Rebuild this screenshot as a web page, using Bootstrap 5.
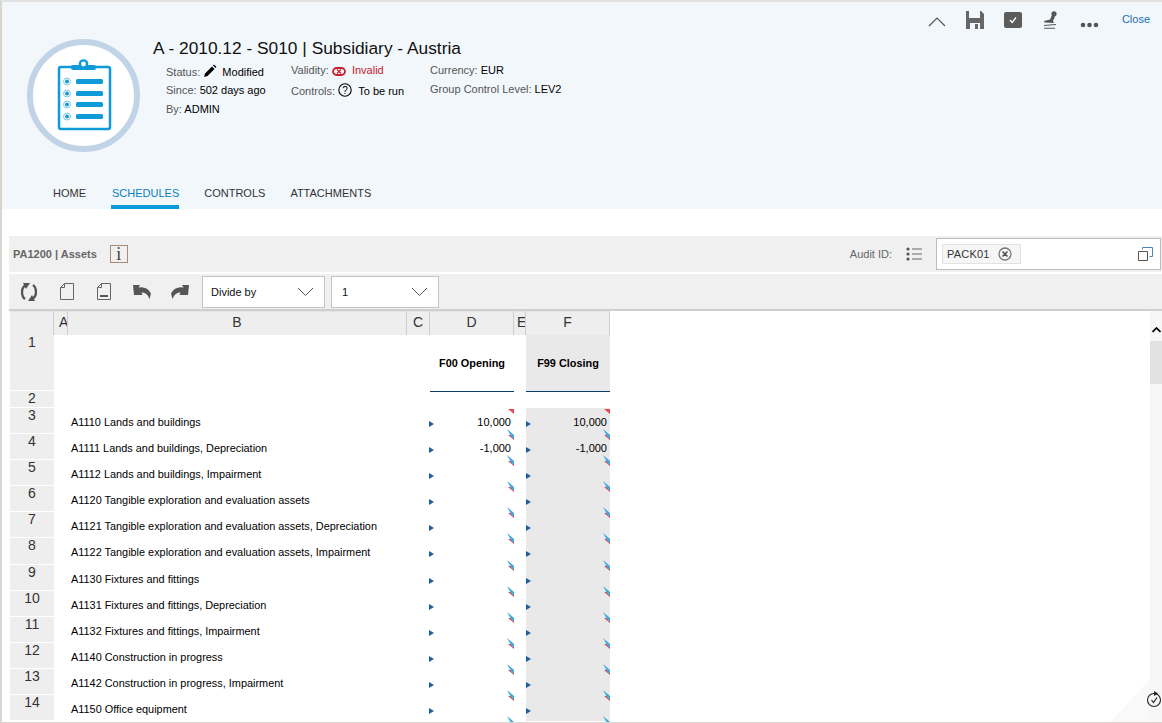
<!DOCTYPE html>
<html lang="en">
<head>
<meta charset="UTF-8">
<meta name="viewport" content="width=device-width, initial-scale=1.0">
<title>A - 2010.12 - S010 | Subsidiary - Austria</title>
<link rel="stylesheet" href="https://cdn.jsdelivr.net/npm/bootstrap@5.3.0/dist/css/bootstrap.min.css">
<style>
html, body { height: 723px; overflow: hidden; }
body { font-family: "Liberation Sans", Arial, sans-serif; font-size: 11px; color: #000; background: #fff; border-top: 2px solid #e2e2e2; border-left: 2px solid #d8d5cf; border-bottom: 1px solid #d8d5cf; }
.pack-head { background: #f2f7fc; height: 207px; }
.head-actions { height: 37px; padding-top: 9px; }
.head-actions svg { display: block; }
.close-link { color: #1a6fb0; text-decoration: none; line-height: 16px; margin-left: 23px; margin-right: 12px; }
.head-body { height: 145px; padding-left: 25px; }
.logo-ring { width: 113px; height: 113px; flex: none; }
.head-text { padding-left: 13px; }
.pack-title { font-size: 17.33px; line-height: 18px; margin: 0; font-weight: 400; color: #111; }
.info-cols { padding-left: 13px; margin-top: 4px; }
.info-col-a { width: 125px; }
.info-col-b { width: 139px; }
.info-line { line-height: 19px; white-space: nowrap; }
.first-status { padding-top: 2px; line-height: 18px; }
.status-pen { margin-right: 2px; }
.second-control { margin-top: 2px; }
.info-label { color: #555; }
.invalid-text { color: #c8202c; }
.pack-tabs { padding-left: 51px; gap: 25px; height: 25px; }
.pack-tabs .nav-link { padding: 0; color: #333; font-size: 11px; line-height: 19px; height: 25px; }
.pack-tabs .nav-link.active { color: #0b7fb8; border-bottom: 4px solid #0b9ddb; padding: 0 0 0 1px; }
.tool-title { margin: 27px 0 0 7px; height: 36px; background: #f0f0f0; padding-left: 4px; }
.sheet-name { color: #666; font-weight: 700; }
.info-box { width: 18px; height: 18px; border: 1px solid #a98a74; margin-left: 13px; font-family: "Liberation Serif", serif; font-size: 18px; line-height: 16px; text-align: center; color: #444; }
.audit-label { color: #666; margin-right: 14px; }
.audit-input { width: 225px; height: 32px; background: #fff; border: 1px solid #bcbcbc; margin: 0 1px 0 14px; padding: 0 7px 0 5px; }
.audit-chip { width: 79px; height: 20px; background: #f6f6f6; border: 1px solid #e2e2e2; padding-left: 4px; color: #333; letter-spacing: .2px; }
.tool-icons { margin: 2px 0 0 7px; height: 35px; background: #f0f0f0; padding-left: 12px; }
.tool-icons svg { flex: none; }
.gap-23 { margin-left: 23px; }
.tool-select { height: 32px; font-size: 11px; border-radius: 0; border: 1px solid #c4c4c4; padding: 1px 8px 0; color: #111; background-size: 17px 10px; background-position: right 10px center; background-image: url("data:image/svg+xml,%3csvg xmlns='http://www.w3.org/2000/svg' viewBox='0 0 17 10'%3e%3cpath fill='none' stroke='%23555' d='M1 1l7.5 7.5L16 1'/%3e%3c/svg%3e"); }
.select-divide { width: 123px; margin-left: 13px; }
.select-factor { width: 108px; margin-left: 6px; padding-left: 10px; }
.grid-rule { height: 2px; margin-left: 7px; background: #cfcfcf; }
.sheet-wrap { margin-left: 8px; height: 411px; overflow: hidden; }
.sheet-grid { display: grid; grid-template-columns: 44px 14px 339px 23px 84px 12px 84px; grid-template-rows: 24px 56px 17px; grid-auto-rows: 26.1px; width: 600px; flex: none; }
.col-head { background: #eee; border-right: 1px solid #cfcfcf; border-top: 1px solid #e4e4e4; text-align: center; font-size: 14px; line-height: 20px; color: #333; overflow: hidden; white-space: nowrap; }
.col-narrow { text-align: left; padding-left: 5px; }
.col-narrow-e { text-align: left; padding-left: 3px; }
.row-head { background: #eee; border-bottom: 1px solid #fff; text-align: center; font-size: 14px; line-height: 14px; color: #333; }
.acct-name { padding: 8px 0 0 3px; font-size: 10.9px; line-height: 13px; white-space: nowrap; }
.measure-head { display: flex; align-items: center; justify-content: center; font-weight: 700; font-size: 10.9px; box-shadow: 0 1px 0 #0b3c6e; padding-top: 1px; }
.shade { background: #e9e9e9; }
.num-cell { position: relative; text-align: right; padding: 8px 3px 0 0; font-size: 11px; line-height: 13px; }
.flag-red { position: absolute; top: 1px; right: 0; }
.flag-blue { position: absolute; bottom: -4px; right: 0; z-index: 1; }
.nav-tick { position: absolute; top: 13px; left: -1px; }
.nav-tick-f { left: 0; }
.sheet-scroll { width: 12px; background: #f7f7f7; margin-left: auto; height: 100%; position: relative; }
.scroll-thumb { height: 43px; background: #e2e2e2; margin-top: 30px; }
.scroll-up { position: absolute; top: 16px; left: 2px; }
.recalc-icon { position: absolute; right: 0; bottom: 14px; }
.corner-fold { position: absolute; right: 12px; bottom: 0; }
</style>
</head>
<body>
<!-- Package header -->
<div class="pack-head">
    <div class="head-actions d-flex justify-content-end">
        <svg width="18" height="12" viewBox="0 0 18 12" class="mt-1"><path d="M1 11l8-8 8 8" fill="none" stroke="#555" stroke-width="1.2"/></svg>
        <svg width="18" height="18" viewBox="0 0 18 18" style="margin-left:20px"><path d="M0 0h15l3 3v15H0z" fill="#666"/><path d="M3 0h11v7H3zM4 12h10v6H4z" fill="#f2f7fc"/><path d="M9 13h3v5H9z" fill="#666"/></svg>
        <svg width="18" height="16" viewBox="0 0 18 16" style="margin-left:20px;margin-top:1px"><rect width="18" height="16" rx="2" fill="#5c5c5c"/><path d="M6 8l2.2 2.4L12 5.5" fill="none" stroke="#fff" stroke-width="1.3"/></svg>
        <svg width="16" height="18" viewBox="0 0 16 18" style="margin-left:21px"><circle cx="11" cy="2.800" r="2.600" fill="#555"/><path d="M9 4l3 1.500-2 4.500 1 2-9.500-.500L1 10l6-1.500z" fill="#555"/><path d="M1 14.500l12-1M1 17.300h11" stroke="#555" stroke-width="1.100"/></svg>
        <svg width="19" height="6" viewBox="0 0 19 6" style="margin-left:21px;margin-top:11px"><circle cx="3" cy="3" r="2.300" fill="#555"/><circle cx="9.500" cy="3" r="2.300" fill="#555"/><circle cx="16" cy="3" r="2.300" fill="#555"/></svg>
        <a href="#" class="close-link">Close</a>
    </div>
    <div class="head-body d-flex">
        <svg class="logo-ring" viewBox="0 0 113 113">
            <circle cx="56.500" cy="56.500" r="53.500" fill="#fff" stroke="#c1d4e7" stroke-width="6"/>
            <rect x="32" y="28" width="51" height="62" rx="2" fill="#fff" stroke="#0f9bd7" stroke-width="2.500"/>
            <rect x="44" y="26" width="25" height="5" rx="2" fill="#0f9bd7"/>
            <circle cx="56.500" cy="25" r="4.800" fill="#0f9bd7"/>
            <circle cx="56.500" cy="25" r="2.400" fill="#fff"/>
            <g fill="#0f9bd7">
                <rect x="49" y="40" width="27" height="5" rx="1.500"/><rect x="49" y="52" width="27" height="5" rx="1.500"/><rect x="49" y="63" width="27" height="5" rx="1.500"/><rect x="49" y="75" width="27" height="5" rx="1.500"/>
                <circle cx="40" cy="42.500" r="2"/><circle cx="40" cy="54.500" r="2"/><circle cx="40" cy="65.500" r="2"/><circle cx="40" cy="77.500" r="2"/>
            </g>
            <g fill="none" stroke="#7cc6e8"><circle cx="40" cy="42.500" r="3.500"/><circle cx="40" cy="54.500" r="3.500"/><circle cx="40" cy="65.500" r="3.500"/><circle cx="40" cy="77.500" r="3.500"/></g>
        </svg>
        <div class="head-text">
            <h1 class="pack-title">A - 2010.12 - S010 | Subsidiary - Austria</h1>
            <div class="info-cols d-flex">
                <div class="info-col-a">
                    <div class="info-line first-status"><span class="info-label">Status:</span>
                        <svg width="14" height="14" viewBox="0 0 14 14" class="align-text-bottom status-pen"><path d="M1 13l1-3.500 7-7 2.500 2.500-7 7z M10 1.500l1-1 2.500 2.500-1 1z" fill="#000"/></svg>
                        Modified</div>
                    <div class="info-line"><span class="info-label">Since:</span> 502 days ago</div>
                    <div class="info-line"><span class="info-label">By:</span> ADMIN</div>
                </div>
                <div class="info-col-b">
                    <div class="info-line"><span class="info-label">Validity:</span>
                        <svg width="14" height="9" viewBox="0 0 14 9"><rect x="1" y="1" width="12" height="7" rx="3.500" fill="none" stroke="#c8202c" stroke-width="1.800"/><path d="M5 2.500l4 4M9 2.500l-4 4" stroke="#c8202c" stroke-width="1.200"/></svg>
                        &nbsp;<span class="invalid-text">Invalid</span></div>
                    <div class="info-line second-control"><span class="info-label">Controls:</span>
                        <svg width="14" height="14" viewBox="0 0 14 14" class="align-text-bottom"><circle cx="7" cy="7" r="6.200" fill="none" stroke="#000" stroke-width="1.100"/><text x="7" y="10.500" font-size="10" text-anchor="middle" font-family="Liberation Sans">?</text></svg>
                        &nbsp;To be run</div>
                </div>
                <div>
                    <div class="info-line"><span class="info-label">Currency:</span> EUR</div>
                    <div class="info-line"><span class="info-label">Group Control Level:</span> LEV2</div>
                </div>
            </div>
        </div>
    </div>
    <ul class="nav pack-tabs">
        <li class="nav-item"><a class="nav-link" href="#">HOME</a></li>
        <li class="nav-item"><a class="nav-link active" href="#">SCHEDULES</a></li>
        <li class="nav-item"><a class="nav-link" href="#">CONTROLS</a></li>
        <li class="nav-item"><a class="nav-link" href="#">ATTACHMENTS</a></li>
    </ul>
</div>

<!-- Schedule title bar -->
<div class="tool-title d-flex align-items-center">
    <span class="sheet-name">PA1200 | Assets</span>
    <span class="info-box">i</span>
    <span class="audit-label ms-auto">Audit ID:</span>
    <svg width="16" height="14" viewBox="0 0 16 14"><g fill="#555"><circle cx="2" cy="2" r="1.600"/><circle cx="2" cy="7" r="1.600"/><circle cx="2" cy="12" r="1.600"/></g><path d="M6 2h10M6 7h10M6 12h10" stroke="#666"/></svg>
    <div class="audit-input d-flex align-items-center justify-content-between">
        <span class="audit-chip d-flex align-items-center justify-content-between">PACK01
            <svg width="14" height="14" viewBox="0 0 14 14" class="me-2"><circle cx="7" cy="7" r="6" fill="none" stroke="#777" stroke-width="1.300"/><path d="M4.500 4.500l5 5M9.500 4.500l-5 5" stroke="#555" stroke-width="1.600"/></svg>
        </span>
        <svg width="15" height="14" viewBox="0 0 15 14"><path d="M.5 4.500h9v9h-9z" fill="none" stroke="#555"/><path d="M4.500 2.500v-2h10v9h-3" fill="none" stroke="#4a86b8"/></svg>
    </div>
</div>

<!-- Grid toolbar -->
<div class="tool-icons d-flex align-items-center">
    <svg width="16" height="18" viewBox="0 0 16 18"><path d="M5 2Q1 4 1 9t3 7M11 16q4-2 4-7t-3-7" fill="none" stroke="#555" stroke-width="2.400"/><path d="M2 0h7L5 6zM14 18H7l4-6z" fill="#555"/></svg>
    <svg width="14" height="17" viewBox="0 0 14 17" class="gap-23"><path d="M4.500.5h9v16H.5V4.500z M.5 4.500h4v-4" fill="#f0f0f0" stroke="#666"/></svg>
    <svg width="14" height="17" viewBox="0 0 14 17" class="gap-23"><path d="M4.500.5h9v16H.5V4.500z M.5 4.500h4v-4" fill="#f0f0f0" stroke="#666"/><path d="M3 13h8" stroke="#555" stroke-width="2"/></svg>
    <svg width="18" height="14" viewBox="0 0 18 14" style="margin-left:22px"><path d="M0 0h7L5.500 2.500Q14 1 18 8.500L16.500 14Q14 7 8.500 7.500L9.500 10H1z" fill="#555"/></svg>
    <svg width="18" height="14" viewBox="0 0 18 14" style="margin-left:20px"><path d="M18 0h-7l1.500 2.500Q4 1 0 8.500L1.500 14Q4 7 9.500 7.500L8.500 10H17z" fill="#555"/></svg>
    <select class="form-select tool-select select-divide"><option>Divide by</option></select>
    <select class="form-select tool-select select-factor"><option>1</option></select>
</div>
<div class="grid-rule"></div>

<!-- Sheet -->
<div class="sheet-wrap d-flex">
    <div class="sheet-grid" id="sheet"></div>
    <div class="sheet-scroll">
        <svg class="scroll-up" width="9" height="6" viewBox="0 0 9 6"><path d="M.5 5l4-4 4 4" fill="none" stroke="#000" stroke-width="1.700"/></svg>
        <div class="scroll-thumb"></div>
        <svg class="corner-fold" width="40" height="42" viewBox="0 0 40 42"><path d="M40 0v42H0z" fill="#f9f9f9"/></svg>
        <svg class="recalc-icon" width="16" height="18" viewBox="0 0 16 18"><circle cx="8" cy="10" r="6.500" fill="none" stroke="#222" stroke-width="1.100"/><path d="M8 1l4 2.500L8 6z" fill="#222"/><path d="M5.500 10l2 2.500 3.500-5" fill="none" stroke="#222" stroke-width="1.200"/></svg>
    </div>
</div>

<script>
    const accounts = [
        ['A1110 Lands and buildings', '10,000'],
        ['A1111 Lands and buildings, Depreciation', '-1,000'],
        ['A1112 Lands and buildings, Impairment', ''],
        ['A1120 Tangible exploration and evaluation assets', ''],
        ['A1121 Tangible exploration and evaluation assets, Depreciation', ''],
        ['A1122 Tangible exploration and evaluation assets, Impairment', ''],
        ['A1130 Fixtures and fittings', ''],
        ['A1131 Fixtures and fittings, Depreciation', ''],
        ['A1132 Fixtures and fittings, Impairment', ''],
        ['A1140 Construction in progress', ''],
        ['A1142 Construction in progress, Impairment', ''],
        ['A1150 Office equipment', '']
    ];
    const tickShape = '<path d="M0 0l5 3-5 3z" fill="#1f5fa0"/>';
    const flags = '<svg class="flag-red" width="6" height="5" viewBox="0 0 6 5"><path d="M0 0h6v5z" fill="#ee4455"/></svg>' +
        '<svg class="flag-blue" width="7" height="9" viewBox="0 0 7 9"><path d="M0 0l7 6v3H5z" fill="#3fa9e0"/></svg>';

    let html = '<div class="col-head"></div>';
    [['A', ' col-narrow'], ['B', ''], ['C', ''], ['D', ''], ['E', ' col-narrow-e'], ['F', '']].forEach(c => {
        html += `<div class="col-head${c[1]}">${c[0]}</div>`;
    });

    // Row 1: measure headings
    html += '<div class="row-head">1</div><div></div><div></div><div></div>' +
        '<div class="measure-head">F00 Opening</div><div></div><div class="measure-head shade">F99 Closing</div>';
    html += '<div class="row-head">2</div><div></div><div></div><div></div><div></div><div></div><div></div>';

    accounts.forEach((a, i) => {
        html += `<div class="row-head">${i + 3}</div><div></div>`;
        html += `<div class="acct-name">${a[0]}</div><div></div>`;
        html += `<div class="num-cell"><svg class="nav-tick" width="5" height="6" viewBox="0 0 5 6">${tickShape}</svg>${a[1]}${flags}</div><div></div>`;
        html += `<div class="num-cell shade"><svg class="nav-tick nav-tick-f" width="5" height="6" viewBox="0 0 5 6">${tickShape}</svg>${a[1]}${flags}</div>`;
    });
    document.getElementById('sheet').innerHTML = html;
</script>
<script src="https://cdn.jsdelivr.net/npm/bootstrap@5.3.0/dist/js/bootstrap.bundle.min.js"></script>
</body>
</html>
